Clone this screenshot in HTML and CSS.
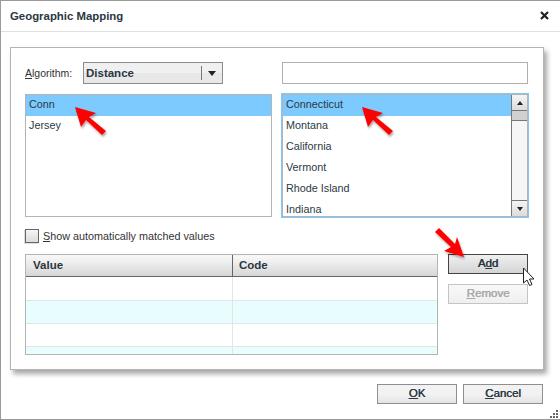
FILE: index.html
```html
<!DOCTYPE html>
<html lang="en">
<head>
<meta charset="utf-8">
<title>Geographic Mapping</title>
<link rel="stylesheet" href="styles.css">
</head>
<body>
<div class="dialog">
  <header class="titlebar">
    <h1 class="title">Geographic Mapping</h1>
    <svg class="close" width="9" height="9" viewBox="0 0 9 9"><path d="M1 1L8 8M8 1L1 8" stroke="#222" stroke-width="2.2"/></svg>
  </header>
  <main class="panel">
    <div class="grid">
      <div class="algo">
        <label class="algo-label"><u>A</u>lgorithm:</label>
        <div class="select"><span class="select-value">Distance</span><span class="select-btn"><i class="tri-down"></i></span></div>
      </div>
      <input class="search" type="text">
      <ul class="list">
        <li class="item selected">Conn</li>
        <li class="item">Jersey</li>
      </ul>
      <div class="list focused">
        <ul class="scroll-items">
          <li class="item selected">Connecticut</li>
          <li class="item">Montana</li>
          <li class="item">California</li>
          <li class="item">Vermont</li>
          <li class="item">Rhode Island</li>
          <li class="item">Indiana</li>
        </ul>
        <div class="scrollbar">
          <span class="sb-btn"><i class="tri-up"></i></span>
          <span class="sb-thumb"></span>
          <span class="sb-track"></span>
          <span class="sb-btn"><i class="tri-down"></i></span>
        </div>
      </div>
    </div>
    <label class="check-row"><span class="checkbox"></span><span><u>S</u>how automatically matched values</span></label>
    <div class="bottom">
      <div class="table">
        <div class="row head"><div class="cell first">Value</div><div class="cell">Code</div></div>
        <div class="row tall"><div class="cell first"></div><div class="cell"></div></div>
        <div class="row alt"><div class="cell first"></div><div class="cell"></div></div>
        <div class="row"><div class="cell first"></div><div class="cell"></div></div>
        <div class="row alt last"><div class="cell first"></div><div class="cell"></div></div>
      </div>
      <div class="side">
        <button class="btn active">A<u>d</u>d</button>
        <button class="btn disabled"><u>R</u>emove</button>
      </div>
    </div>
  </main>
  <footer class="footer">
    <button class="btn"><u>O</u>K</button>
    <button class="btn"><u>C</u>ancel</button>
  </footer>
  <svg class="grip" width="10" height="10" viewBox="0 0 10 10" fill="#666"><rect x="7" y="1" width="2" height="2"/><rect x="4" y="4" width="2" height="2"/><rect x="7" y="4" width="2" height="2"/><rect x="1" y="7" width="2" height="2"/><rect x="4" y="7" width="2" height="2"/><rect x="7" y="7" width="2" height="2"/></svg>
  <svg class="overlay" width="560" height="420" viewBox="0 0 560 420">
    <defs>
      <path id="arrow" d="M0 0L21 6L14 10L31 24L27 28L11 13L6 20Z"/>
      <filter id="soft" x="-30%" y="-30%" width="170%" height="170%"><feDropShadow dx="1" dy="2" stdDeviation="1.2" flood-color="#000" flood-opacity=".35"/></filter>
    </defs>
    <use href="#arrow" x="75" y="107" fill="#f00" filter="url(#soft)"/>
    <use href="#arrow" x="362" y="107" fill="#f00" filter="url(#soft)"/>
    <path d="M464 257L444 251L451 247L435 232L439 228L455 244L457 237Z" fill="#f00" filter="url(#soft)"/>
    <path d="M523.5 268V283L527 280L529.5 285.5L532 284.5L529.5 279H534Z" fill="#fff" stroke="#222" stroke-width="1"/>
  </svg>
</div>
</body>
</html>
```
FILE: styles.css
```css
* { box-sizing: border-box; }
html, body { margin: 0; padding: 0; }
body { width: 560px; height: 420px; overflow: hidden; background: #fff; font-family: "Liberation Sans", Arial, sans-serif; font-size: 11px; color: #2b3a44; }
ul { list-style: none; margin: 0; padding: 0; }
.dialog { position: relative; width: 560px; height: 420px; display: flex; flex-direction: column; border: 1px solid #9a9a9a; border-right: 0; background: #fff; }
.titlebar { height: 31px; flex: none; display: flex; align-items: center; justify-content: space-between; padding: 0 11px 0 9px; border-bottom: 1px solid #e0e0e0; }
.title { margin: 0; font-size: 11.4px; font-weight: bold; color: #2a3742; }
.close { display: block; margin-top: -1px; }
.panel { margin: 15px 16px 0 9px; height: 323px; flex: none; border: 1px solid #b4b4b4; padding: 14px 14px 0; background: #fff; box-shadow: 3px 4px 5px rgba(0,0,0,.35); }
.grid { display: grid; grid-template-columns: 247px 246px; column-gap: 10px; row-gap: 10px; grid-template-rows: 22px 123px; }
.algo { display: flex; align-items: center; }
.algo-label { width: 58px; color: #333; font-size: 10.5px; margin-top: -1px; }
.select { width: 140px; height: 22px; display: flex; align-items: center; border: 1px solid #8c8c8c; background: linear-gradient(#f0f0f0 0 50%, #e8e8e8 50% 100%); }
.select-value { flex: 1; padding-left: 2px; font-weight: bold; font-size: 11.5px; color: #2a3742; }
.select-btn { width: 21px; height: 14px; display: flex; align-items: center; justify-content: center; border-left: 1px solid #777; }
.search { width: 246px; height: 22px; border: 1px solid #b0b0b0; background: #fff; padding: 0; margin: 0; }
.list { border: 1px solid #b4b4b4; background: #fff; height: 123px; overflow: hidden; }
.list.focused { display: flex; box-shadow: 0 0 0 1px #7ec8fb; }
.scroll-items { flex: 1; min-width: 0; }
.item { height: 21px; line-height: 18px; padding-left: 3px; color: #2b3a44; font-size: 10.8px; }
.item.selected { background: #7ccafe; }
.scrollbar { width: 16px; flex: none; display: flex; flex-direction: column; border-left: 1px solid #777; background: #f6f6f6; }
.sb-btn { height: 16px; flex: none; display: flex; align-items: center; justify-content: center; background: linear-gradient(#f4f4f4, #dcdcdc); border-bottom: 1px solid #777; }
.sb-btn:last-child { border-bottom: 0; border-top: 1px solid #777; }
.sb-thumb { height: 10px; flex: none; background: #d0d0d0; border-bottom: 1px solid #777; }
.sb-track { flex: 1; }
.tri-down, .tri-up { display: block; width: 0; height: 0; border-left: 4px solid transparent; border-right: 4px solid transparent; }
.tri-down { border-top: 5px solid #222; }
.tri-up { border-bottom: 5px solid #222; }
.scrollbar .tri-down, .scrollbar .tri-up { border-left-width: 3.5px; border-right-width: 3.5px; border-top-width: 4px; border-bottom-width: 4px; }
.check-row { display: flex; align-items: center; gap: 4px; margin-top: 11px; height: 16px; color: #333; font-size: 10.8px; }
.checkbox { width: 14px; height: 14px; border: 1px solid #666; background: linear-gradient(#f6f6f6, #dcdcdc); box-shadow: -1px 1px 0 #ddd; }
.bottom { display: flex; gap: 10px; margin-top: 10px; }
.table { width: 413px; height: 101px; border: 1px solid #b4b4b4; overflow: hidden; }
.row { display: flex; height: 23px; border-bottom: 1px solid #e2e6e6; }
.row.tall { height: 24px; }
.row.alt { background: #e8fdfe; }
.row.last { height: 7px; border-bottom: 0; }
.row.head { height: 22px; border-bottom: 1px solid #666; background: linear-gradient(#f8f8f8, #f0f0f0 30%, #d6d6d6); font-weight: bold; font-size: 11.5px; color: #2a3742; }
.cell { flex: 1; padding-left: 6px; line-height: 21px; }
.cell.first { flex: none; width: 207px; padding-left: 7px; border-right: 1px solid #e2e6e6; }
.head .cell.first { border-right-color: #666; }
.side { display: flex; flex-direction: column; gap: 10px; }
.btn { width: 80px; height: 20px; padding: 0 0 2px; margin: 0; border: 1px solid #8e8e8e; background: linear-gradient(#f2f2f2 0 50%, #e4e4e4 100%); font-family: inherit; font-weight: normal; font-size: 11.5px; text-shadow: .4px 0 0 currentColor; color: #2a3742; text-align: center; }
.btn.active { border-color: #444; background: linear-gradient(#f0f0f0, #d4d4d4); }
.btn.disabled { border-color: #c4c4c4; background: linear-gradient(#f8f8f8, #efefef); color: #a8a8a8; }
.footer { display: flex; justify-content: flex-end; gap: 6px; margin: 14px 16px 0 0; padding-right: 1px; }
.grip { position: absolute; right: 1px; bottom: 0; }
.overlay { position: absolute; left: -1px; top: -1px; pointer-events: none; }
```
